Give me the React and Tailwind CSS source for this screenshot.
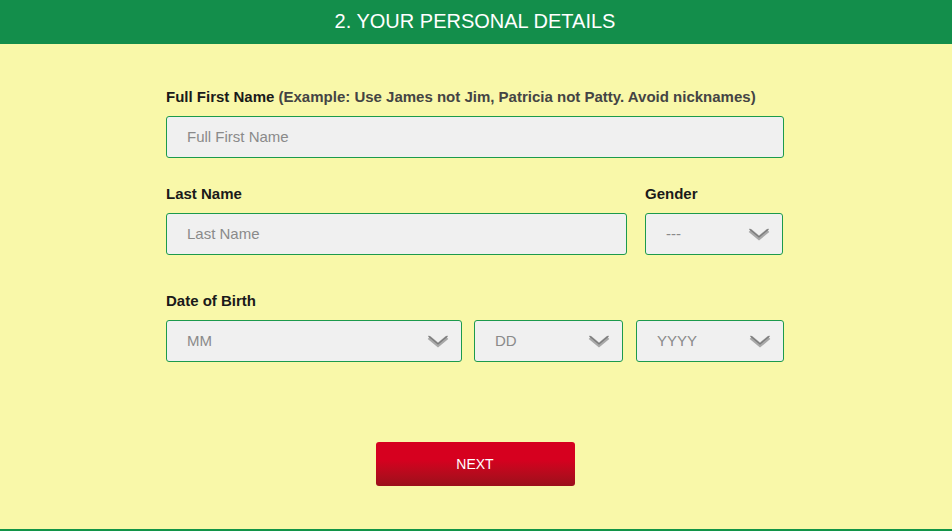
import React from 'react'

function Chevron() {
  return (
    <svg width="22" height="14" viewBox="0 0 22 14" className="shrink-0">
      <polyline points="2,3.5 11,11 20,3.5" fill="none" stroke="#a8a8a8" strokeWidth="4" strokeLinejoin="miter" />
      <polyline points="1.5,2 11,10 20.5,2" fill="none" stroke="#7a7a7a" strokeWidth="1.2" />
    </svg>
  )
}

function SelectBox({ label, className }) {
  return (
    <div className={`h-[42px] flex items-center justify-between pl-5 pr-[12px] bg-[#f0f0f0] border border-[#1c9a4c] rounded-[3px] ${className}`}>
      <span className="text-[15px] text-[#8a8a8a]">{label}</span>
      <Chevron />
    </div>
  )
}

function TextBox({ placeholder, className }) {
  return (
    <div className={`h-[42px] flex items-center pl-5 bg-[#f0f0f0] border border-[#1c9a4c] rounded-[3px] ${className}`}>
      <span className="text-[15px] text-[#8a8a8a]">{placeholder}</span>
    </div>
  )
}

export default function App() {
  return (
    <div className="w-[952px] h-[531px] bg-[#f9f8a9] font-['Liberation_Sans',Arial,sans-serif] flex flex-col">
      {/* Header */}
      <div className="h-[44px] bg-[#138e4b] flex items-center justify-center">
        <h1 className="text-white text-[20px] pb-[3px] ml-[-2px]">2. YOUR PERSONAL DETAILS</h1>
      </div>

      <div className="flex-1 border-b-2 border-[#129447] flex flex-col items-center">
        <div className="w-[618px] mt-[45px] ml-[-2px]">
          <p className="text-[15px] leading-4 font-bold text-[#1a1a1a]">
            Full First Name <span className="text-[#444]">(Example: Use James not Jim, Patricia not Patty. Avoid nicknames)</span>
          </p>
          <TextBox placeholder="Full First Name" className="mt-[11px]" />

          <div className="flex gap-[18px] mt-[28px]">
            <div className="w-[461px]">
              <p className="text-[15px] leading-4 font-bold text-[#1a1a1a]">Last Name</p>
              <TextBox placeholder="Last Name" className="mt-[11px]" />
            </div>
            <div className="w-[138px]">
              <p className="text-[15px] leading-4 font-bold text-[#1a1a1a]">Gender</p>
              <SelectBox label="---" className="mt-[11px]" />
            </div>
          </div>

          <p className="text-[15px] leading-4 font-bold text-[#1a1a1a] mt-[38px]">Date of Birth</p>
          <div className="flex mt-[11px]">
            <SelectBox label="MM" className="w-[296px]" />
            <SelectBox label="DD" className="w-[149px] ml-[12px]" />
            <SelectBox label="YYYY" className="w-[148px] ml-[13px]" />
          </div>
        </div>

        <button className="mt-[80px] ml-[-2px] w-[199px] h-[44px] rounded-[3px] bg-gradient-to-b from-[#d6001f] from-40% to-[#9b0f1b] text-white text-[14px]">
          NEXT
        </button>
      </div>
    </div>
  )
}
